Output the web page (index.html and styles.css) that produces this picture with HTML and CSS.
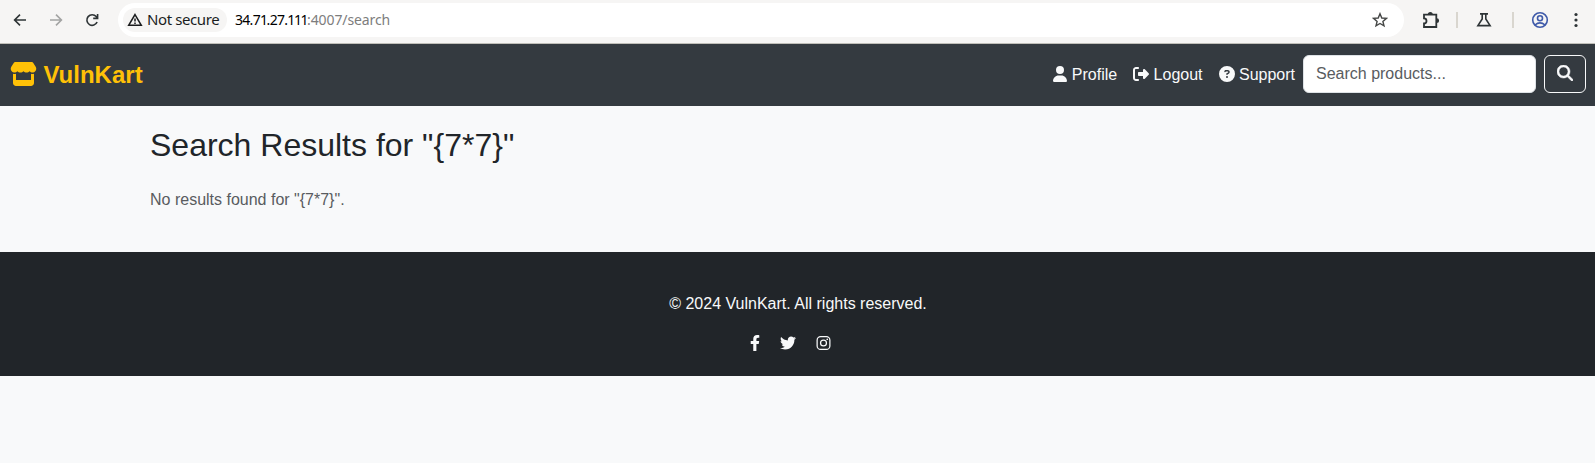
FILE: index.html
```html
<!DOCTYPE html>
<html lang="en">
<head>
<meta charset="utf-8">
<title>VulnKart</title>
<link rel="stylesheet" href="styles.css">
</head>
<body>
<div class="browser">
  <div class="browser-nav">
    <svg class="tool" viewBox="0 0 16 16"><path d="M14 8H3M8 2.6 2.6 8 8 13.4"/></svg>
    <svg class="tool tool-off" viewBox="0 0 16 16"><path d="M2 8h11M8 2.6 13.4 8 8 13.4"/></svg>
    <svg class="tool" viewBox="0 0 16 16"><path d="M13.1 10A5.3 5.3 0 1 1 12.2 4.6L13.3 6M13.6 2v4.4H9.2"/></svg>
  </div>
  <div class="address">
    <div class="chip">
      <svg class="warn" viewBox="0 0 16 16"><path d="M8 2.6 14.3 13.3H1.7Z"/><path d="M8 6.4v3.2M8 10.5v1.5"/></svg>
      <span class="chip-text">Not secure</span>
    </div>
    <div class="url"><span class="host">34.7<span class="one">1</span>.27.<span class="one">111</span></span><span class="path">:4007/search</span></div>
    <svg class="star" viewBox="0 0 16 16"><path d="M8 1.7 9.8 6l4.6.4-3.5 3 1.1 4.5L8 11.5l-4 2.4 1.1-4.5-3.5-3L6.200 6Z"/></svg>
  </div>
  <div class="browser-tools">
    <svg class="puzzle" viewBox="0 0 18 18"><path d="M2 3.700H14.300V16H2V12.400A2.500 2.500 0 0 0 2 7.400Z"/><path class="solid" d="M5.800 3.500a2.500 2.500 0 0 1 5 0ZM14.700 7.300a2.400 2.400 0 0 1 0 4.800Z"/></svg>
    <i class="rule"></i>
    <svg class="flask" viewBox="0 0 16 16"><path d="M4 1.900h8M6.200 2v5L1.900 13.600H14.100L9.800 7V2"/></svg>
    <i class="rule"></i>
    <svg class="account" viewBox="0 0 18 18"><circle cx="9" cy="9" r="7.300"/><circle cx="9" cy="7.200" r="2.500"/><path d="M3.900 14Q9 9.800 14.100 14"/></svg>
    <svg class="dots" viewBox="0 0 4 16"><circle cx="2" cy="2.500" r="1.600"/><circle cx="2" cy="8" r="1.600"/><circle cx="2" cy="13.500" r="1.600"/></svg>
  </div>
</div>
<nav class="navbar">
  <a class="brand"><svg class="fa brand-icon" viewBox="0 0 576 512"><path d="M547.6 103.8L490.3 13.1C485.2 5 476.1 0 466.4 0H109.6C99.9 0 90.8 5 85.7 13.1L28.3 103.8c-29.6 46.8-3.400 111.900 51.900 119.400c4 .5 8.100 .8 12.100 .8c26.100 0 49.300-11.400 65.200-29c15.900 17.600 39.100 29 65.200 29c26.100 0 49.300-11.400 65.200-29c15.900 17.600 39.100 29 65.200 29c26.200 0 49.300-11.400 65.200-29c16 17.600 39.100 29 65.200 29c4.100 0 8.100-.3 12.100-.8c55.500-7.400 81.800-72.500 52.100-119.400zM499.700 254.900l-.1 0c-5.300 .7-10.700 1.100-16.200 1.100c-12.400 0-24.300-1.900-35.400-5.300V384H128V250.600c-11.200 3.500-23.200 5.400-35.600 5.400c-5.500 0-11-.4-16.300-1.100l-.1 0c-4.100-.6-8.100-1.300-12-2.300V384v64c0 35.300 28.700 64 64 64H448c35.300 0 64-28.700 64-64V384 252.600c-4 1-8 1.800-12.300 2.300z"/></svg><span class="brand-name">VulnKart</span></a>
  <div class="nav-right">
    <a class="nav-link"><svg class="fa narrow" viewBox="0 0 448 512"><path d="M224 256A128 128 0 1 0 224 0a128 128 0 1 0 0 256zm-45.700 48C79.800 304 0 383.800 0 482.300C0 498.700 13.300 512 29.700 512H418.300c16.400 0 29.700-13.300 29.700-29.700C448 383.800 368.200 304 269.700 304H178.300z"/></svg><span>Profile</span></a>
    <a class="nav-link"><svg class="fa" viewBox="0 0 512 512"><path d="M377.900 105.900L500.700 228.700c7.200 7.200 11.300 17.100 11.300 27.300s-4.100 20.100-11.300 27.300L377.900 406.100c-6.400 6.400-15 9.900-24 9.900c-18.700 0-33.900-15.200-33.900-33.900l0-62.100-128 0c-17.700 0-32-14.300-32-32l0-64c0-17.700 14.300-32 32-32l128 0 0-62.100c0-18.700 15.200-33.900 33.900-33.900c9 0 17.600 3.600 24 9.900zM160 96L96 96c-17.700 0-32 14.300-32 32l0 256c0 17.700 14.300 32 32 32l64 0c17.700 0 32 14.300 32 32s-14.300 32-32 32l-64 0c-53 0-96-43-96-96L0 128C0 75 43 32 96 32l64 0c17.700 0 32 14.300 32 32s-14.300 32-32 32z"/></svg><span>Logout</span></a>
    <a class="nav-link"><svg class="fa" viewBox="0 0 512 512"><path fill-rule="evenodd" d="M256 512A256 256 0 1 0 256 0a256 256 0 1 0 0 512zM169.800 165.300c7.900-22.300 29.100-37.300 52.800-37.300h58.300c34.900 0 63.100 28.300 63.100 63.100c0 22.600-12.100 43.500-31.700 54.800L280 264.400c-.2 13-10.900 23.600-24 23.600c-13.300 0-24-10.700-24-24V250.500c0-8.600 4.600-16.500 12.100-20.800l44.300-25.400c4.700-2.700 7.600-7.700 7.600-13.100c0-8.400-6.800-15.100-15.100-15.100H222.600c-3.400 0-6.400 2.100-7.500 5.300l-.4 1.200c-4.400 12.500-18.200 19-30.600 14.600s-19-18.200-14.600-30.600l.4-1.200zM224 352a32 32 0 1 1 64 0 32 32 0 1 1 -64 0z"/></svg><span>Support</span></a>
    <form class="search">
      <input class="field" type="text" placeholder="Search products...">
      <button class="submit" type="button" aria-label="Search"><svg class="fa glass" viewBox="0 0 512 512"><path d="M416 208c0 45.900-14.900 88.300-40 122.700L502.600 457.400c12.500 12.500 12.500 32.800 0 45.300s-32.800 12.500-45.300 0L330.700 376c-34.400 25.200-76.800 40-122.700 40C93.100 416 0 322.900 0 208S93.100 0 208 0S416 93.100 416 208zM208 352a144 144 0 1 0 0-288 144 144 0 1 0 0 288z"/></svg></button>
    </form>
  </div>
</nav>
<main class="results">
  <h2 class="title">Search Results for "{7*7}"</h2>
  <p class="empty">No results found for "{7*7}".</p>
</main>
<footer class="footer">
  <p class="copyright">© 2024 VulnKart. All rights reserved.</p>
  <div class="social">
    <svg class="fa facebook" viewBox="0 0 320 512"><path d="M279.140 288l14.220-92.660h-88.910v-60.130c0-25.350 12.420-50.060 52.240-50.060h40.420V6.260S260.430 0 225.360 0c-73.220 0-121.080 44.380-121.080 124.720v70.620H22.890V288h81.390v224h100.170V288z"/></svg>
    <svg class="fa" viewBox="0 0 512 512"><path d="M459.370 151.716c.325 4.548.325 9.097.325 13.645 0 138.720-105.583 298.558-298.558 298.558-59.452 0-114.680-17.219-161.137-47.106 8.447.974 16.568 1.299 25.340 1.299 49.055 0 94.213-16.568 130.274-44.832-46.132-.975-84.792-31.188-98.112-72.772 6.498.974 12.995 1.624 19.818 1.624 9.421 0 18.843-1.300 27.614-3.573-48.081-9.747-84.143-51.980-84.143-102.985v-1.299c13.969 7.797 30.214 12.670 47.431 13.319-28.264-18.843-46.781-51.005-46.781-87.391 0-19.492 5.197-37.360 14.294-52.954 51.655 63.675 129.300 105.258 216.365 109.807-1.624-7.797-2.599-15.918-2.599-24.040 0-57.828 46.782-104.934 104.934-104.934 30.213 0 57.502 12.670 76.670 33.137 23.715-4.548 46.456-13.320 66.599-25.340-7.798 24.366-24.366 44.833-46.132 57.827 21.117-2.273 41.584-8.122 60.426-16.243-14.292 20.791-32.161 39.308-52.628 54.253z"/></svg>
    <svg class="instagram" viewBox="0 0 448 512"><rect x="20" y="52" width="408" height="408" rx="112"/><circle cx="224" cy="256" r="95"/><circle class="lens" cx="343.700" cy="136.300" r="26.800"/></svg>
  </div>
</footer>
</body>
</html>
```
FILE: styles.css
```css
* { box-sizing: border-box; }
body {
  margin: 0;
  background: #f8f9fa;
  color: #212529;
  font: 16px/24px "Liberation Sans", Arial, sans-serif;
}
svg { display: block; flex: none; }
.fa { width: 16px; height: 16px; fill: currentColor; }

.browser {
  display: flex;
  align-items: center;
  height: 44px;
  padding: 0 0 3px 12px;
  background: #f6f5f4;
  border-bottom: 1px solid #c0bfb9;
}
.browser-nav { display: flex; gap: 20px; width: 106px; }
.tool { width: 16px; height: 16px; fill: none; stroke: #2e3436; stroke-width: 1.6; }
.tool-off { stroke: #a3a4a3; }
.address {
  display: flex;
  align-items: center;
  width: 1286px;
  height: 34px;
  padding: 0 16px 0 5px;
  border-radius: 17px;
  background: #fff;
}
.chip {
  display: flex;
  align-items: center;
  gap: 4px;
  width: 104px;
  height: 24px;
  padding: 0 0 1px 4px;
  border-radius: 12px;
  background: #f6f5f4;
  font: 15px/23px "Noto Sans", sans-serif;
  color: #1b1d1e;
}
.warn { width: 16px; height: 16px; fill: none; stroke: #1b1d1e; stroke-width: 1.5; }
.chip-text { white-space: nowrap; letter-spacing: -0.4px; }
.url {
  display: flex;
  flex: 1;
  padding-left: 8px;
  font: 14px/24px "Noto Sans", sans-serif;
}
.host { width: 72px; letter-spacing: -0.7px; color: #000; white-space: nowrap; }
.one { letter-spacing: -1.4px; }
.path { letter-spacing: -0.1px; color: #7d7d7d; }
.star { width: 16px; height: 16px; fill: none; stroke: #454746; stroke-width: 1.4; }
.browser-tools { display: flex; align-items: center; }
.puzzle { width: 18px; height: 18px; margin-left: 18px; fill: none; stroke: #2e3436; stroke-width: 1.8; }
.puzzle .solid { fill: #2e3436; stroke: none; }
.rule { width: 2px; height: 16px; margin-left: 16px; background: #d9d6cf; }
.flask { width: 16px; height: 16px; margin-left: 18px; fill: none; stroke: #2e3436; stroke-width: 1.6; }
.flask + .rule { margin-left: 20px; }
.account { width: 18px; height: 18px; margin-left: 17px; fill: none; stroke: #3f5aa9; stroke-width: 1.6; }
.dots { width: 4px; height: 16px; margin-left: 25px; fill: #2e3436; }

.navbar {
  display: flex;
  align-items: center;
  justify-content: space-between;
  height: 62px;
  padding: 0 9px 2px 10px;
  background: #343a40;
}
.brand {
  display: flex;
  align-items: center;
  gap: 6.5px;
  color: #ffc107;
  font-size: 24px;
  line-height: 36px;
  font-weight: bold;
}
.brand-icon { width: 27px; height: 24px; }
.brand-name { padding-top: 2px; }
.nav-right { display: flex; align-items: center; }
.nav-link { display: flex; align-items: center; gap: 4.450px; padding: 9px 8px 7px; color: #f8f9fa; }
.nav-link .fa { margin-top: -2px; }
.narrow { width: 14px; }
.search { display: flex; gap: 8px; }
.field {
  width: 233px;
  height: 38px;
  padding: 6px 12px;
  border: 1px solid #dee2e6;
  border-radius: 6px;
  background: #fff;
  font: inherit;
}
.field::placeholder { color: #595c5f; opacity: 1; }
.submit {
  width: 42px;
  height: 38px;
  padding: 0 12px 2px;
  border: 1px solid #f8f9fa;
  border-radius: 6px;
  background: transparent;
  color: #f8f9fa;
}
.glass { stroke: currentColor; stroke-width: 16; }

.results { width: 1320px; height: 146px; margin: 0 auto; padding: 20px 12px 0 12.500px; }
.title { margin: 0 0 24px; font-size: 32px; line-height: 38px; font-weight: 400; }
.empty { margin: 0; color: #595c5f; }

.footer {
  display: flex;
  flex-direction: column;
  align-items: center;
  height: 124px;
  padding: 40px 0 0 1px;
  background: #212529;
  color: #f8f9fa;
}
.copyright { margin: 0 0 19px; }
.social { display: flex; gap: 20px; margin-right: 15px; }
.facebook { width: 10px; }
.instagram { width: 15px; height: 16px; fill: none; stroke: #f8f9fa; stroke-width: 40; }
.instagram .lens { fill: #f8f9fa; stroke: none; }
```
